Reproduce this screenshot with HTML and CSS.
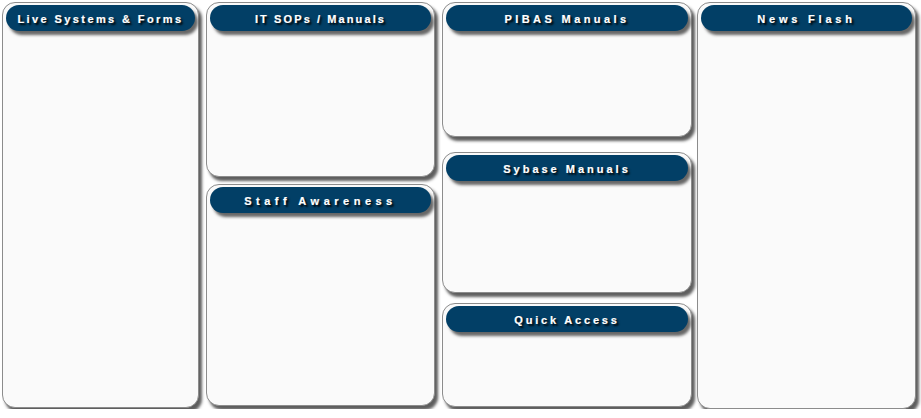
FILE: index.html
```html
<!DOCTYPE html>
<html>
<head>
<meta charset="utf-8">
<link rel="stylesheet" href="styles.css">
</head>
<body>
<div class="board">
  <div class="col col-1">
    <div class="panel grow"><div class="head ls-24">Live Systems &amp; Forms</div></div>
  </div>
  <div class="col col-2">
    <div class="panel p-sops"><div class="head ls-21">IT SOPs / Manuals</div></div>
    <div class="panel grow"><div class="head ls-45">Staff Awareness</div></div>
  </div>
  <div class="col col-3">
    <div class="panel p-pibas"><div class="head ls-34">PIBAS Manuals</div></div>
    <div class="panel p-sybase"><div class="head ls-30">Sybase Manuals</div></div>
    <div class="panel grow"><div class="head ls-28">Quick Access</div></div>
  </div>
  <div class="col col-4">
    <div class="panel grow"><div class="head ls-38">News Flash</div></div>
  </div>
</div>
</body>
</html>
```

FILE: styles.css
```css
html, body {
  margin: 0;
  padding: 0;
  background: #ffffff;
}
.board {
  display: flex;
  gap: 7px;
  padding: 2px 0 0 2px;
  height: 407px;
  box-sizing: content-box;
}
.col {
  display: flex;
  flex-direction: column;
}
.col-1 { width: 197px; height: 406px; }
.col-2 { width: 229px; height: 404px; gap: 7px; }
.col-3 { width: 250px; height: 405px; }
.col-4 { width: 219px; height: 407px; margin-left: -2px; }
.col-3 .p-pibas { height: 135px; margin-bottom: 15px; }
.col-3 .p-sybase { height: 141px; margin-bottom: 10px; }
.col-2 .p-sops { height: 175px; }
.panel {
  box-sizing: border-box;
  background: #fafafa;
  border: 1px solid #8c8c8c;
  border-radius: 13px;
  box-shadow: 3px 4px 3px rgba(40, 40, 40, 0.75);
  padding: 2px 3px;
}
.grow { flex: 1; }
.head {
  height: 26px;
  background: #023f66;
  border-radius: 13px;
  box-shadow: 3px 4px 3px rgba(40, 40, 40, 0.7);
  color: #ffffff;
  font-family: "Liberation Sans", Arial, sans-serif;
  font-weight: bold;
  font-size: 11px;
  letter-spacing: 3px;
  text-align: center;
  line-height: 29px;
  text-shadow: 2px 2px 2px #000000;
  -webkit-text-stroke: 0.2px #ffffff;
  white-space: nowrap;
}
.ls-21 { letter-spacing: 2.1px; }
.ls-24 { letter-spacing: 2.4px; }
.ls-28 { letter-spacing: 2.8px; }
.ls-30 { letter-spacing: 3px; }
.ls-34 { letter-spacing: 3.4px; }
.ls-38 { letter-spacing: 3.8px; }
.ls-45 { letter-spacing: 4.5px; }
```
